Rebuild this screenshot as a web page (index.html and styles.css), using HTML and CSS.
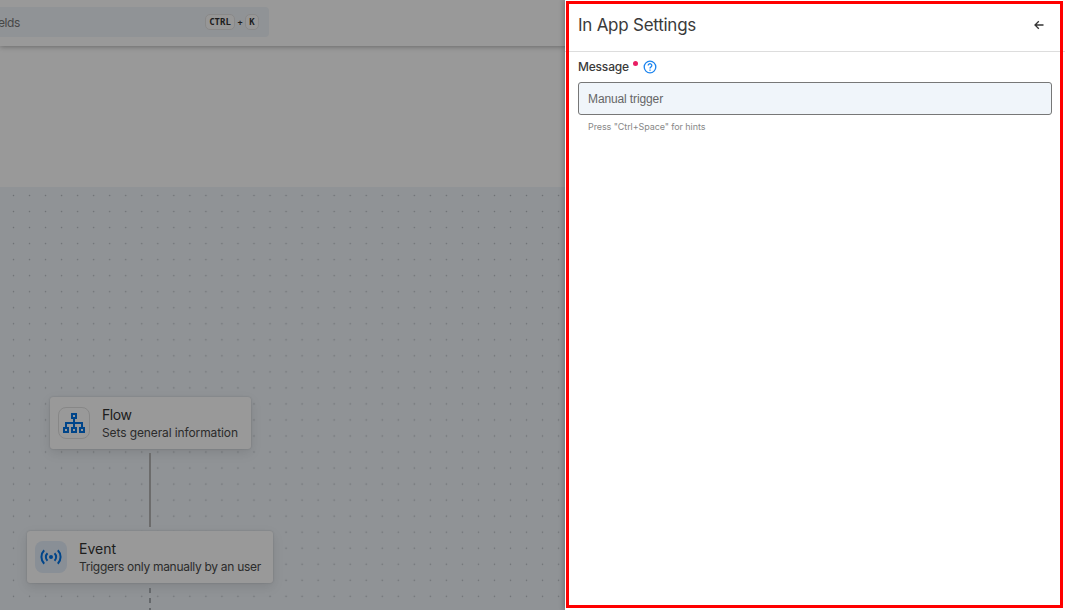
FILE: index.html
```html
<!DOCTYPE html>
<html lang="en">
<head>
<meta charset="utf-8">
<title>In App Settings</title>
<link rel="stylesheet" href="styles.css">
</head>
<body>
<div class="app">
  <header class="topbar">
    <div class="search">
      <span class="search-text">elds</span>
      <span class="keys"><kbd class="ctrl">CTRL</kbd><span class="plus">+</span><kbd class="k">K</kbd></span>
    </div>
  </header>
  <div class="toolbar"></div>
  <main class="canvas">
    <div class="node node-flow">
      <span class="icon-box outlined">
        <svg width="24" height="24" viewBox="0 0 24 24" fill="none" stroke="#0073e6" stroke-width="2">
          <path d="M10 3h4v4h-4zM2 17h4v4H2zM10 17h4v4h-4zM18 17h4v4h-4zM12 7v10M4 17v-5h16v5"/>
        </svg>
      </span>
      <span class="labels"><span class="name flow-name">Flow</span><span class="desc flow-desc">Sets general information</span></span>
    </div>
    <div class="node node-event">
      <span class="icon-box tinted">
        <svg width="24" height="24" viewBox="0 0 24 24" fill="none" stroke="#0073e6" stroke-width="2">
          <circle cx="12" cy="12" r="2" fill="#0073e6" stroke="none"/>
          <path d="M8.500 8.200a5.200 5.200 0 0 0 0 7.600M15.500 8.200a5.200 5.200 0 0 1 0 7.600M5.200 5.300a9.500 9.500 0 0 0 0 13.400M18.800 5.300a9.500 9.500 0 0 1 0 13.400"/>
        </svg>
      </span>
      <span class="labels"><span class="name event-name">Event</span><span class="desc event-desc">Triggers only manually by an user</span></span>
    </div>
    <div class="edge"></div>
    <div class="edge-dashed"></div>
  </main>
</div>
<div class="backdrop"></div>
<aside class="drawer">
  <div class="drawer-head">
    <h1 class="title">In App Settings</h1>
    <svg class="back" width="12" height="12" viewBox="0 0 12 12" fill="none" stroke="#333" stroke-width="1.300">
      <path d="M10.500 6H2M5.800 2.200L2 6l3.800 3.800"/>
    </svg>
  </div>
  <div class="form">
    <div class="label-row">
      <label class="label" for="message">Message</label>
      <span class="required"></span>
      <svg class="help" width="14" height="14" viewBox="0 0 14 14" fill="none" stroke="#1c84ee" stroke-width="1.300">
        <circle cx="7" cy="7" r="5.800"/>
        <path d="M5.200 5.500a1.800 1.700 0 1 1 2.800 1.400Q7 7.500 7 8.500M7 9.500v1.200"/>
      </svg>
    </div>
    <input class="field" id="message" type="text" value="Manual trigger">
    <div class="hint">Press "Ctrl+Space" for hints</div>
  </div>
</aside>
<div class="highlight"></div>
</body>
</html>
```
FILE: styles.css
```css
* { box-sizing: border-box; }
body {
  margin: 0;
  width: 1065px;
  height: 610px;
  position: relative;
  overflow: hidden;
  font-family: Inter, "Open Sans", sans-serif;
  background: #fff;
}
.app { display: flex; flex-direction: column; height: 610px; }
.topbar {
  height: 46px;
  flex: none;
  padding-top: 7px;
  background: #fff;
  box-shadow: 0 1px 5px rgba(0, 0, 0, .3);
  z-index: 1;
}
.search {
  width: 269px;
  height: 30px;
  display: flex;
  align-items: center;
  justify-content: space-between;
  padding-right: 10px;
  border-radius: 0 4px 4px 0;
  background: #f0f5fa;
}
.search-text { font-size: 12px; line-height: 16px; color: #777; letter-spacing: -.4px; margin: 2px 0 0 -2px; }
.keys { display: flex; align-items: center; font: bold 9px "Noto Sans", sans-serif; color: #333; }
kbd {
  height: 16px;
  display: flex;
  align-items: center;
  justify-content: center;
  border: 1px solid #e4e4e4;
  border-radius: 5px;
  background: #fcfcfc;
  font: bold 9px "DejaVu Sans Mono", monospace;
}
.ctrl { width: 30px; }
.k { width: 14px; }
.plus { width: 10px; text-align: center; }
.toolbar { height: 141px; flex: none; background: #fff; }
.canvas {
  flex: 1;
  position: relative;
  background-color: #f0f5fa;
  background-image: radial-gradient(circle, #b4b9bf .7px, transparent 1px);
  background-size: 16.040px 16.040px;
  background-position: 5.500px .500px;
}
.node {
  position: absolute;
  display: flex;
  align-items: center;
  height: 52px;
  padding-left: 9px;
  border-radius: 3px;
  background: #fff;
  box-shadow: 0 4px 12px rgba(0, 0, 0, .1), 0 0 2px rgba(0, 0, 0, .18);
}
.node-flow { left: 49.500px; top: 210px; width: 201px; padding-left: 8.500px; }
.node-event { left: 26.500px; top: 344px; width: 246.500px; padding-left: 8.500px; }
.icon-box {
  width: 32px;
  height: 32px;
  display: flex;
  align-items: center;
  justify-content: center;
  border-radius: 8px;
}
.outlined { border: 1px solid #e2e2e2; }
.tinted { background: #e4eefa; }
.labels { display: flex; flex-direction: column; margin: 1px 0 0 12px; white-space: nowrap; color: #333; }
.name { font-size: 14px; line-height: 18px; }
.flow-name { letter-spacing: -.4px; }
.desc { font-size: 12px; line-height: 17px; color: #4a4a4a; }
.flow-desc { letter-spacing: -.110px; }
.event-desc { letter-spacing: -.290px; }
.edge { position: absolute; left: 149px; top: 266px; width: 2px; height: 74px; background: #b5b5b5; }
.edge-dashed {
  position: absolute;
  left: 149px;
  top: 401px;
  width: 2px;
  height: 22px;
  background: repeating-linear-gradient(#a9adb3 0 5px, transparent 5px 10px);
}
.backdrop { position: absolute; inset: 0; background: rgba(0, 0, 0, .4); z-index: 2; }
.drawer {
  position: absolute;
  top: 0;
  right: 0;
  width: 500px;
  height: 610px;
  z-index: 3;
  background: #fff;
  box-shadow: -1px 0 5px rgba(0, 0, 0, .25);
}
.drawer-head {
  height: 52px;
  display: flex;
  align-items: center;
  justify-content: space-between;
  padding: 0 20px 2px 13px;
  border-bottom: 1px solid #ddd;
}
.title { margin: 0; font-size: 17px; line-height: 24px; font-weight: 400; letter-spacing: -.250px; color: #3a3a3a; }
.form { padding: 6px 13px 0; }
.label-row { display: flex; align-items: center; height: 17px; }
.label { font-size: 12px; font-weight: 500; letter-spacing: -.2px; color: #3a3a3a; }
.required { width: 5px; height: 5px; border-radius: 50%; background: #e91e63; margin: -6px 5px 0 4px; }
.field {
  display: block;
  width: 474px;
  height: 33px;
  margin-top: 7px;
  padding: 0 9px;
  border: 1px solid #777;
  border-radius: 3px;
  background: #f0f5fa;
  color: #666;
  font: 12px "Liberation Sans", Arial, sans-serif;
  letter-spacing: -.120px;
}
.hint { margin: 5px 0 0 10px; font-size: 9px; line-height: 14px; letter-spacing: -.090px; color: #888; }
.highlight {
  position: absolute;
  left: 566px;
  top: 1px;
  width: 497px;
  height: 607px;
  border: 3px solid #f00;
  z-index: 4;
}
```
